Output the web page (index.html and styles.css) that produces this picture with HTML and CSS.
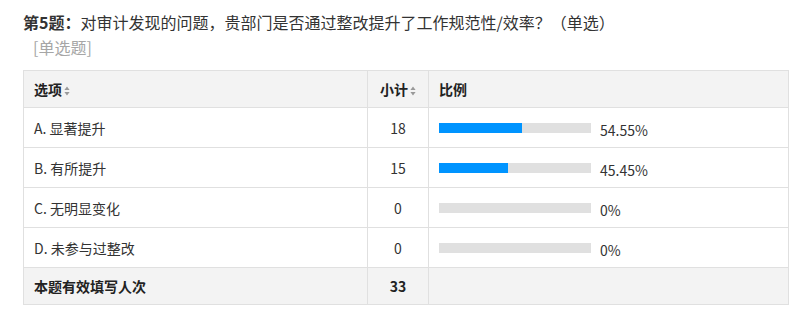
FILE: index.html
```html
<!DOCTYPE html>
<html lang="zh-CN">
<head>
<meta charset="utf-8">
<link rel="stylesheet" href="styles.css">
</head>
<body>
<div class="question">
  <div class="title"><span class="qno">第5题：</span>对审计发现的问题，贵部门是否通过整改提升了工作规范性/效率？（单选）</div>
  <div class="qtype">[单选题]</div>
  <table class="result">
    <thead>
      <tr>
        <th class="c-opt">选项<svg class="sort" width="6" height="10" viewBox="0 0 6 10"><path d="M3 0.5 L5.6 4 L0.4 4 Z M3 9.5 L5.6 6 L0.4 6 Z" fill="#999"/></svg></th>
        <th class="c-num">小计<svg class="sort" width="6" height="10" viewBox="0 0 6 10"><path d="M3 0.5 L5.6 4 L0.4 4 Z M3 9.5 L5.6 6 L0.4 6 Z" fill="#999"/></svg></th>
        <th class="c-pct">比例</th>
      </tr>
    </thead>
    <tbody>
      <tr>
        <td class="c-opt">A. 显著提升</td>
        <td class="c-num">18</td>
        <td class="c-pct"><span class="bar"><span class="fill" style="width:54.55%"></span></span><span class="pct">54.55%</span></td>
      </tr>
      <tr>
        <td class="c-opt">B. 有所提升</td>
        <td class="c-num">15</td>
        <td class="c-pct"><span class="bar"><span class="fill" style="width:45.45%"></span></span><span class="pct">45.45%</span></td>
      </tr>
      <tr>
        <td class="c-opt">C. 无明显变化</td>
        <td class="c-num">0</td>
        <td class="c-pct"><span class="bar"><span class="fill" style="width:0%"></span></span><span class="pct">0%</span></td>
      </tr>
      <tr>
        <td class="c-opt">D. 未参与过整改</td>
        <td class="c-num">0</td>
        <td class="c-pct"><span class="bar"><span class="fill" style="width:0%"></span></span><span class="pct">0%</span></td>
      </tr>
    </tbody>
    <tfoot>
      <tr>
        <td class="c-opt">本题有效填写人次</td>
        <td class="c-num">33</td>
        <td class="c-pct"></td>
      </tr>
    </tfoot>
  </table>
</div>
</body>
</html>
```
FILE: styles.css
```css
html, body {
  margin: 0;
  padding: 0;
  background: #fff;
}
body {
  font-family: "Noto Sans CJK SC", "Noto Sans", sans-serif;
  color: #333;
}
.question {
  padding: 11px 5px 0 23px;
}
.title {
  font-size: 16px;
  line-height: 22px;
  color: #333;
}
.qno {
  font-weight: bold;
}
.qtype {
  font-size: 16px;
  line-height: 22px;
  color: #a6a6a6;
  padding-left: 10px;
  margin-top: 3px;
}
.result {
  margin-top: 12px;
  width: 766px;
  border-collapse: collapse;
  font-size: 14px;
  table-layout: fixed;
}
.result th,
.result td {
  border: 1px solid #e0e0e0;
  padding: 0 10px;
  text-align: left;
  font-weight: normal;
}
.result thead th {
  background: #f3f3f3;
  font-weight: bold;
  height: 36px;
  color: #222;
}
.result tbody td {
  height: 39px;
}
.result tfoot td {
  background: #f3f3f3;
  font-weight: bold;
  height: 36px;
  color: #222;
}
.c-opt { width: 323px; }
.c-num { width: 40px; text-align: center !important; }
.c-pct { width: auto; }
.sort {
  display: inline-block;
  vertical-align: -1px;
  margin-left: 2px;
}
.bar {
  display: inline-block;
  width: 152px;
  height: 10px;
  background: #e0e0e0;
  vertical-align: middle;
  position: relative;
  top: -1px;
}
.fill {
  display: block;
  height: 100%;
  background: #0094ff;
}
.pct {
  display: inline-block;
  margin-left: 9px;
  vertical-align: middle;
  position: relative;
  top: 1px;
}
```
